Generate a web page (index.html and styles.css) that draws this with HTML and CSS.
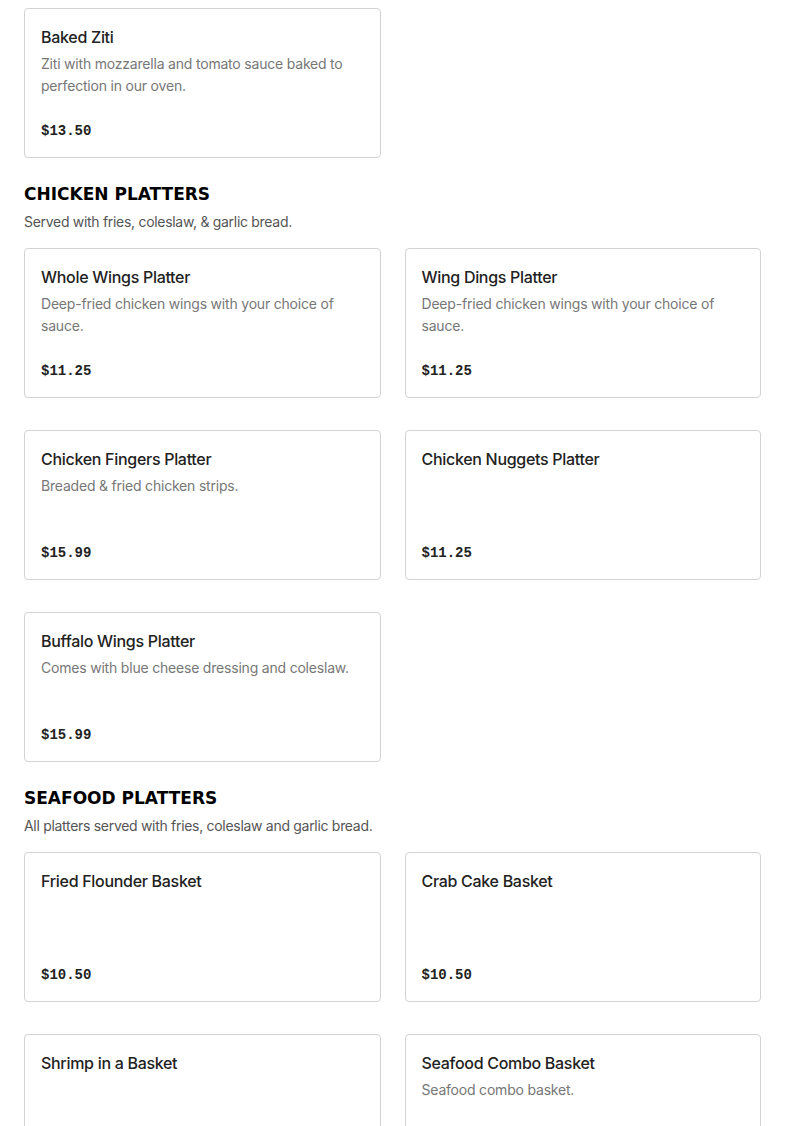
FILE: index.html
```html
<!DOCTYPE html>
<html>
<head>
<meta charset="utf-8">
<link rel="stylesheet" href="styles.css">
</head>
<body>
<main class="menu">
  <section class="section section-first">
    <div class="grid">
      <div class="card">
        <h3 class="title">Baked Ziti</h3>
        <p class="desc">Ziti with mozzarella and tomato sauce baked to perfection in our oven.</p>
        <div class="price">$13.50</div>
      </div>
    </div>
  </section>

  <section class="section">
    <h2 class="heading">CHICKEN PLATTERS</h2>
    <p class="sub">Served with fries, coleslaw, &amp; garlic bread.</p>
    <div class="grid">
      <div class="card">
        <h3 class="title">Whole Wings Platter</h3>
        <p class="desc">Deep-fried chicken wings with your choice of sauce.</p>
        <div class="price">$11.25</div>
      </div>
      <div class="card">
        <h3 class="title">Wing Dings Platter</h3>
        <p class="desc">Deep-fried chicken wings with your choice of sauce.</p>
        <div class="price">$11.25</div>
      </div>
      <div class="card">
        <h3 class="title">Chicken Fingers Platter</h3>
        <p class="desc">Breaded &amp; fried chicken strips.</p>
        <div class="price">$15.99</div>
      </div>
      <div class="card">
        <h3 class="title">Chicken Nuggets Platter</h3>
        <div class="price">$11.25</div>
      </div>
      <div class="card">
        <h3 class="title">Buffalo Wings Platter</h3>
        <p class="desc">Comes with blue cheese dressing and coleslaw.</p>
        <div class="price">$15.99</div>
      </div>
    </div>
  </section>

  <section class="section">
    <h2 class="heading">SEAFOOD PLATTERS</h2>
    <p class="sub">All platters served with fries, coleslaw and garlic bread.</p>
    <div class="grid">
      <div class="card">
        <h3 class="title">Fried Flounder Basket</h3>
        <div class="price">$10.50</div>
      </div>
      <div class="card">
        <h3 class="title">Crab Cake Basket</h3>
        <div class="price">$10.50</div>
      </div>
      <div class="card">
        <h3 class="title">Shrimp in a Basket</h3>
      </div>
      <div class="card">
        <h3 class="title">Seafood Combo Basket</h3>
        <p class="desc">Seafood combo basket.</p>
      </div>
    </div>
  </section>
</main>
</body>
</html>
```

FILE: styles.css
```css
* { box-sizing: border-box; }
html, body { margin: 0; padding: 0; background: #fff; }
body {
  font-family: "Inter", "Liberation Sans", sans-serif;
  color: #222;
}
.menu {
  padding: 8px 24px 24px;
  display: flex;
  flex-direction: column;
  gap: 25px;
}
.section { display: flex; flex-direction: column; }
.heading {
  margin: 0;
  font-family: "DejaVu Sans", sans-serif;
  font-weight: 900;
  font-size: 17px;
  line-height: 22px;
  color: #000;
  letter-spacing: 0;
}
.sub {
  margin: 6px 0 15px;
  font-size: 14px;
  line-height: 22px;
  color: #555;
  letter-spacing: -0.3px;
}
.grid {
  display: grid;
  grid-template-columns: 1fr 1fr;
  column-gap: 24px;
  row-gap: 32px;
}
.card {
  border: 1px solid #d3d3d3;
  border-radius: 4px;
  height: 150px;
  padding: 16px 16px 15px;
  display: flex;
  flex-direction: column;
}
.title {
  margin: 0;
  font-size: 16px;
  font-weight: 500;
  line-height: 24px;
  color: #222;
  letter-spacing: -0.3px;
}
.desc {
  margin: 4px 0 0;
  font-size: 14px;
  line-height: 22px;
  color: #777;
  letter-spacing: -0.2px;
}
.price {
  margin-top: auto;
  font-family: "Liberation Mono", monospace;
  font-weight: 700;
  font-size: 14px;
  line-height: 22px;
  color: #222;
}
```
